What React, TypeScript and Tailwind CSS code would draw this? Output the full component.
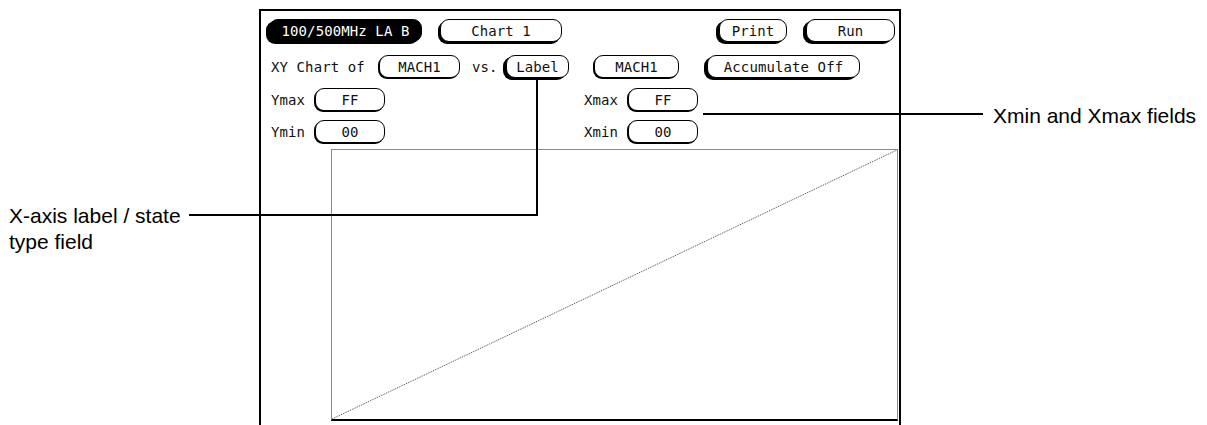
import React from 'react';

const mono = "font-['DejaVu_Sans_Mono','Liberation_Mono',monospace] text-[14px] leading-none tracking-[0.1px]";

function Key({
  label,
  w,
  strong,
  dark,
  className = '',
}: {
  label: string;
  w: string;
  strong?: boolean;
  dark?: boolean;
  className?: string;
}) {
  return (
    <div
      className={`${w} h-[23px] shrink-0 rounded-[9px] border-[1.5px] border-black flex items-center justify-center ${mono} ${
        dark ? 'bg-black text-white' : 'bg-white text-[#111]'
      } ${strong ? 'shadow-[-3px_2px_0_0_#000]' : 'shadow-[-1px_1px_0_0_#000]'} ${className}`}
    >
      {label}
    </div>
  );
}

function ChartPlot() {
  return (
    <div className="ml-[70px] w-[567px] h-[272px] border border-[#8a8a8a] border-b-2 border-b-black">
      <svg width="100%" height="100%" viewBox="0 0 565 269" preserveAspectRatio="none">
        <line x1="0" y1="269" x2="565" y2="0" stroke="#444" strokeWidth="1" strokeDasharray="1 1" />
      </svg>
    </div>
  );
}

export default function App() {
  return (
    <div className="relative w-[1207px] h-[425px] overflow-hidden bg-white flex font-['Liberation_Sans',Arial,sans-serif] text-black">
      {/* left callout text */}
      <div className="w-[259px] shrink-0 pt-[203px] pl-[9px] text-[21px] leading-[26px]">
        X-axis label / state
        <br />
        type field
      </div>

      {/* analyzer screen */}
      <div className="mt-[9px] w-[642px] h-[430px] shrink-0 border-2 border-b-0 border-black flex flex-col">
        <div className="h-[8px]" />

        {/* row 1 */}
        <div className="h-[36px] flex items-start pl-[8px] pr-[4px]">
          <Key label="100/500MHz LA B" w="w-[153px]" strong dark />
          <Key label="Chart 1" w="w-[122px]" className="ml-[18px] shadow-[-2px_2px_0_0_#000]" />
          <Key label="Print" w="w-[68px]" strong className="ml-auto" />
          <Key label="Run" w="w-[89px]" strong className="ml-[19px]" />
        </div>

        {/* row 2 */}
        <div className="h-[33px] flex items-start pl-[10px]">
          <div className={`w-[108px] h-[23px] flex items-center text-[#111] ${mono}`}>XY Chart of</div>
          <Key label="MACH1" w="w-[81px]" />
          <div className={`ml-[12px] w-[34px] h-[23px] flex items-center text-[#111] ${mono}`}>vs.</div>
          <Key label="Label" w="w-[63px]" strong />
          <Key label="MACH1" w="w-[85px]" className="ml-[25px]" />
          <Key label="Accumulate Off" w="w-[153px]" strong className="ml-[28px]" />
        </div>

        {/* row 3 */}
        <div className="h-[32px] flex items-start pl-[10px]">
          <div className={`w-[44px] h-[23px] flex items-center text-[#111] ${mono}`}>Ymax</div>
          <Key label="FF" w="w-[70px]" />
          <div className={`ml-[199px] w-[44px] h-[23px] flex items-center text-[#111] ${mono}`}>Xmax</div>
          <Key label="FF" w="w-[70px]" />
        </div>

        {/* row 4 */}
        <div className="h-[29px] flex items-start pl-[10px]">
          <div className={`w-[44px] h-[23px] flex items-center text-[#111] ${mono}`}>Ymin</div>
          <Key label="00" w="w-[70px]" />
          <div className={`ml-[199px] w-[44px] h-[23px] flex items-center text-[#111] ${mono}`}>Xmin</div>
          <Key label="00" w="w-[70px]" />
        </div>

        <ChartPlot />
      </div>

      {/* right callout text */}
      <div className="ml-[92px] pt-[103px] text-[21px] leading-[26px] whitespace-nowrap">
        Xmin and Xmax fields
      </div>

      {/* callout leader lines */}
      <div className="absolute left-[536px] top-[80px] w-[2px] h-[136px] bg-black" />
      <div className="absolute left-[189px] top-[214px] w-[349px] h-[2px] bg-black" />
      <div className="absolute left-[703px] top-[113px] w-[280px] h-[2px] bg-black" />
    </div>
  );
}
